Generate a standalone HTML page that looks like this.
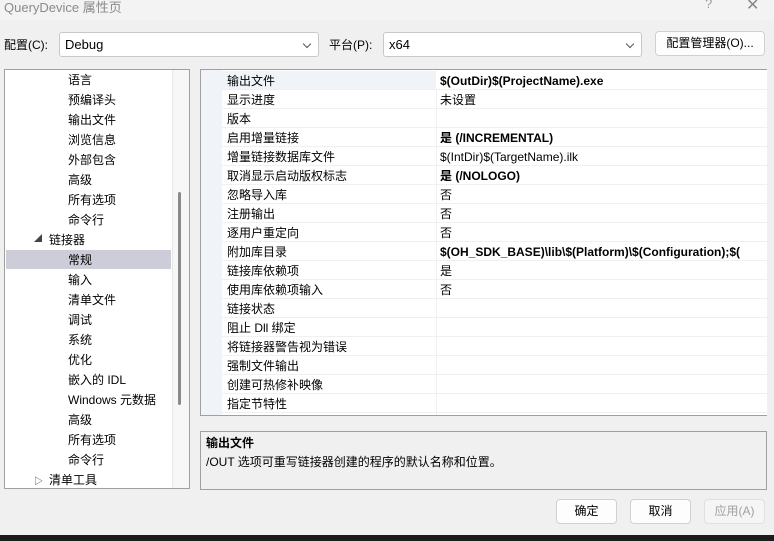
<!DOCTYPE html><html><head><meta charset="utf-8"><style>
*{margin:0;padding:0;box-sizing:border-box}
body{width:774px;height:541px;background:#f0f0f0;font-family:"Liberation Sans","Noto Sans CJK SC",sans-serif;font-size:12px;color:#000;position:relative;overflow:hidden}
.a{position:absolute;white-space:nowrap}
.combo{position:absolute;background:#fff;border:1px solid #c8c8c8;border-radius:3px;height:25px;line-height:23px;padding-left:5px;font-size:13px}
.chev{position:absolute;right:8px;top:8px;width:6px;height:6px;border-right:1px solid #555;border-bottom:1px solid #555;transform:rotate(45deg)}
.btn{position:absolute;background:#fdfdfd;border:1px solid #d0d0d0;border-radius:4px;text-align:center;font-size:12px}
.tree div{position:absolute;left:68px;height:20px;line-height:22px;font-size:12px}
.row{position:absolute;left:222px;width:545px;height:19px;border-bottom:1px solid #f0f0f0;line-height:21px;font-size:12px}
.row span{position:absolute;left:5px}
.row b{position:absolute;left:218px;font-weight:bold}
.row i{position:absolute;left:218px;font-style:normal}
</style></head><body>
<div class="a" style="left:0;top:0;width:774px;height:20px;background:#f3f3f3"></div>
<div class="a" style="left:4px;top:-3px;color:#8a8a8a;font-size:13px">QueryDevice 属性页</div>
<div class="a" style="left:705px;top:-4px;color:#999;font-size:13px">?</div>
<div class="a" style="left:746px;top:-5px;color:#888;font-size:16px">✕</div>

<div class="a" style="left:4px;top:36px;font-size:12px">配置(C):</div>
<div class="combo" style="left:59px;top:32px;width:260px">Debug<div class="chev"></div></div>
<div class="a" style="left:329px;top:36px;font-size:12px">平台(P):</div>
<div class="combo" style="left:383px;top:32px;width:259px">x64<div class="chev"></div></div>
<div class="btn" style="left:655px;top:31px;width:110px;height:25px;line-height:23px">配置管理器(O)...</div>

<div class="a" style="left:4px;top:69px;width:186px;height:420px;background:#fff;border:1px solid #a0a0a0"></div>
<div class="a" style="left:172px;top:70px;width:17px;height:418px;background:#f7f7f7;border-left:1px solid #e6e6e6"></div>
<div class="a" style="left:178px;top:192px;width:3px;height:213px;background:#8a8a8a;border-radius:2px"></div>
<div class="a" style="left:6px;top:250px;width:165px;height:19px;background:#cdcdd9"></div>
<div class="tree">
<div style="top:69px">语言</div><div style="top:89px">预编译头</div><div style="top:109px">输出文件</div><div style="top:129px">浏览信息</div><div style="top:149px">外部包含</div><div style="top:169px">高级</div><div style="top:189px">所有选项</div><div style="top:209px">命令行</div>
<div style="top:229px;left:49px">链接器</div>
<div style="top:249px">常规</div><div style="top:269px">输入</div><div style="top:289px">清单文件</div><div style="top:309px">调试</div><div style="top:329px">系统</div><div style="top:349px">优化</div><div style="top:369px">嵌入的 IDL</div><div style="top:389px">Windows 元数据</div><div style="top:409px">高级</div><div style="top:429px">所有选项</div><div style="top:449px">命令行</div>
<div style="top:469px;left:49px">清单工具</div>
</div>
<div class="a" style="left:34px;top:233px;font-size:8px;color:#444">◢</div>
<div class="a" style="left:34px;top:474px;font-size:9px;color:#444">▷</div>

<div class="a" style="left:200px;top:69px;width:567px;height:347px;background:#fff;border:1px solid #a0a0a0;border-right:none"></div>
<div class="a" style="left:201px;top:70px;width:21px;height:345px;background:#f0f4f9"></div>
<div class="a" style="left:436px;top:70px;width:1px;height:345px;background:#f0f0f0"></div>
<div class="row" style="top:71px;background:#f0f4f9;width:214px"><span>输出文件</span></div>
<div class="row" style="top:71px;left:436px;width:331px;background:#fff"><b style="left:4px">$(OutDir)$(ProjectName).exe</b></div>
<div class="row" style="top:90px"><span>显示进度</span><i>未设置</i></div>
<div class="row" style="top:109px"><span>版本</span></div>
<div class="row" style="top:128px"><span>启用增量链接</span><b>是 (/INCREMENTAL)</b></div>
<div class="row" style="top:147px"><span>增量链接数据库文件</span><i>$(IntDir)$(TargetName).ilk</i></div>
<div class="row" style="top:166px"><span>取消显示启动版权标志</span><b>是 (/NOLOGO)</b></div>
<div class="row" style="top:185px"><span>忽略导入库</span><i>否</i></div>
<div class="row" style="top:204px"><span>注册输出</span><i>否</i></div>
<div class="row" style="top:223px"><span>逐用户重定向</span><i>否</i></div>
<div class="row" style="top:242px;overflow:hidden"><span>附加库目录</span><b>$(OH_SDK_BASE)\lib\$(Platform)\$(Configuration);$(</b></div>
<div class="row" style="top:261px"><span>链接库依赖项</span><i>是</i></div>
<div class="row" style="top:280px"><span>使用库依赖项输入</span><i>否</i></div>
<div class="row" style="top:299px"><span>链接状态</span></div>
<div class="row" style="top:318px"><span>阻止 Dll 绑定</span></div>
<div class="row" style="top:337px"><span>将链接器警告视为错误</span></div>
<div class="row" style="top:356px"><span>强制文件输出</span></div>
<div class="row" style="top:375px"><span>创建可热修补映像</span></div>
<div class="row" style="top:394px"><span>指定节特性</span></div>

<div class="a" style="left:200px;top:431px;width:567px;height:59px;background:#f0f0f0;border:1px solid #a0a0a0"></div>
<div class="a" style="left:206px;top:434px;font-weight:bold">输出文件</div>
<div class="a" style="left:206px;top:453px">/OUT 选项可重写链接器创建的程序的默认名称和位置。</div>

<div class="btn" style="left:556px;top:499px;width:61px;height:25px;line-height:23px">确定</div>
<div class="btn" style="left:630px;top:499px;width:61px;height:25px;line-height:23px">取消</div>
<div class="btn" style="left:704px;top:499px;width:61px;height:25px;line-height:23px;background:#f5f5f5;border-color:#e0e0e0;color:#a0a0a0">应用(A)</div>
<div class="a" style="left:0;top:535px;width:774px;height:6px;background:#1c1c1c"></div>
</body></html>
